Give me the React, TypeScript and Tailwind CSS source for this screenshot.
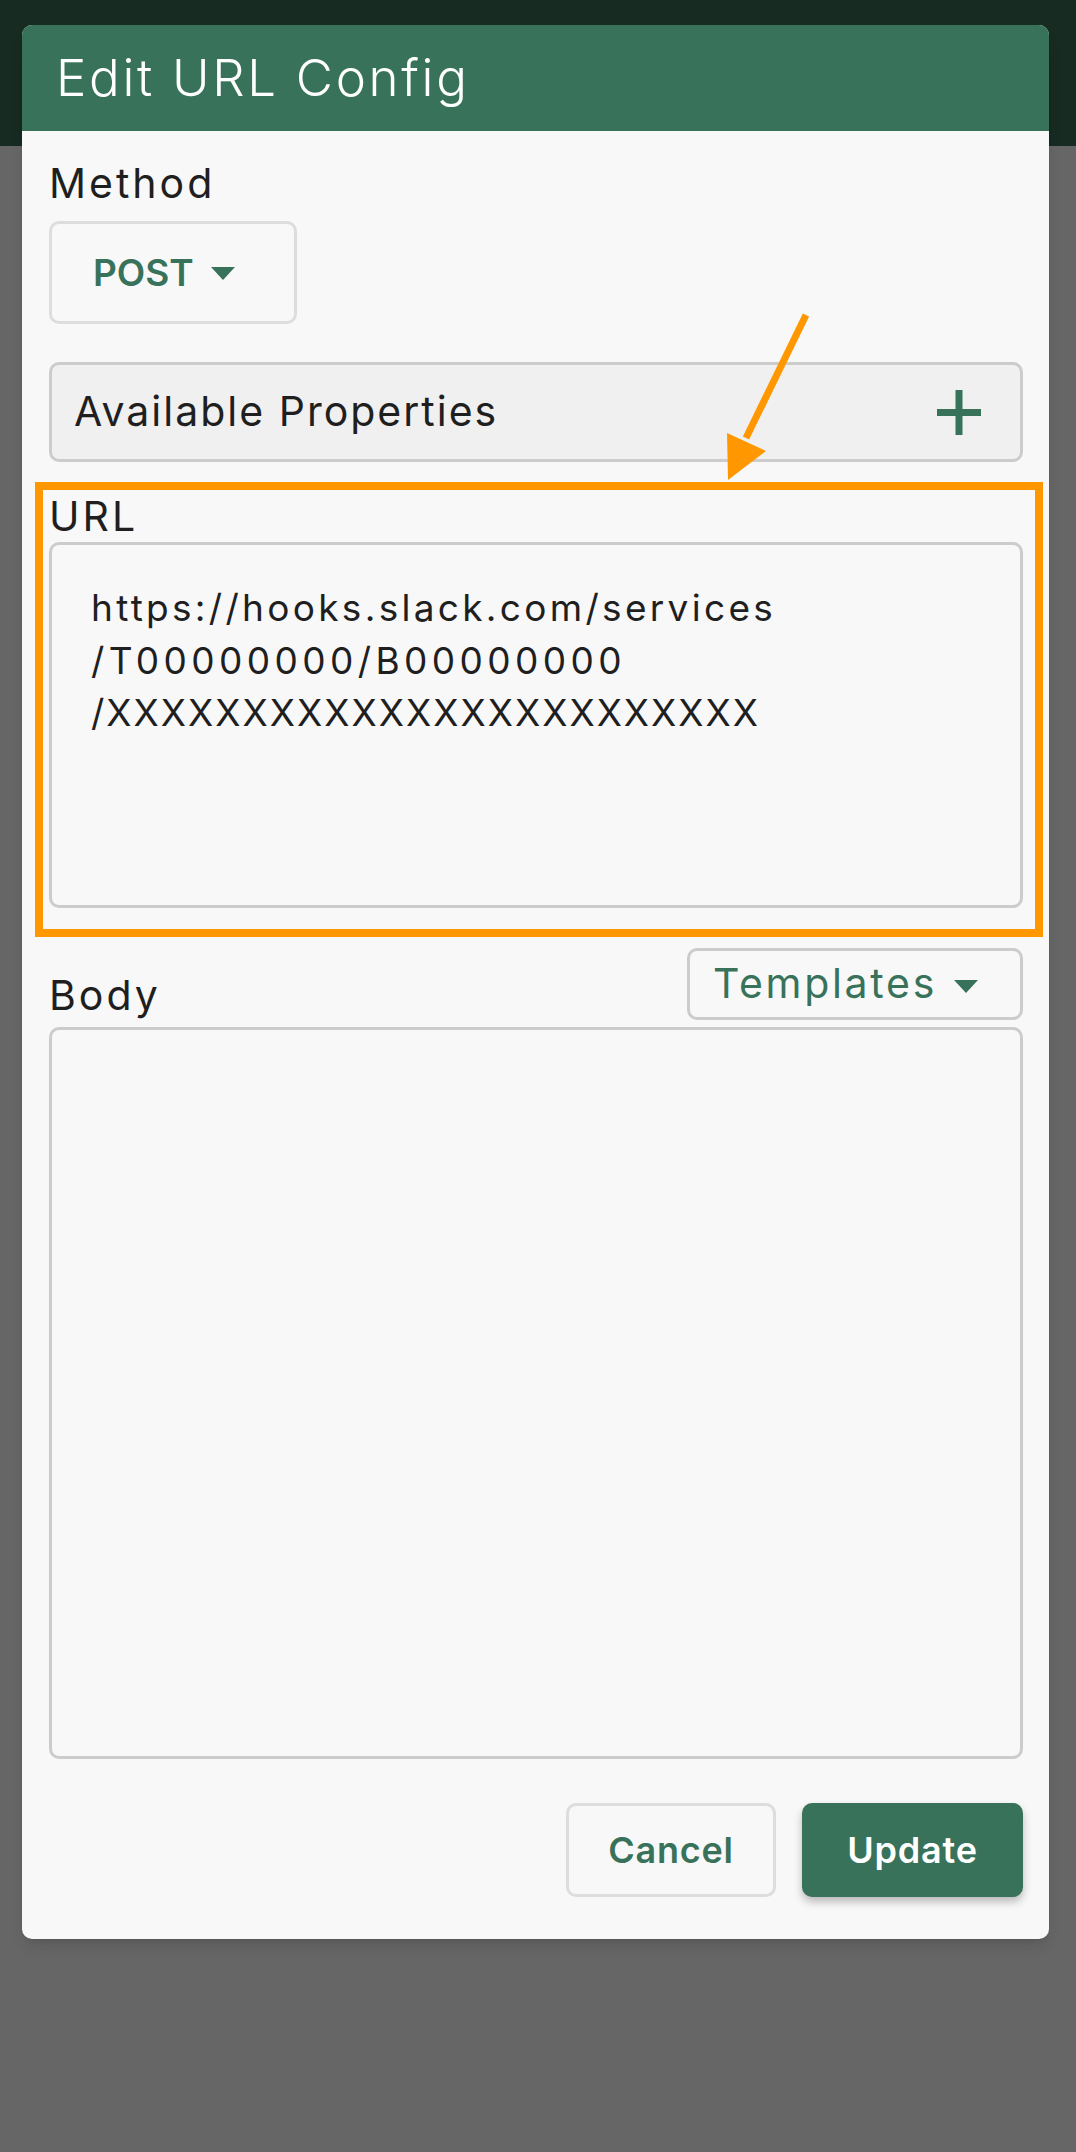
import { useState } from 'react';

const font = { fontFamily: 'Inter, "Noto Sans", sans-serif' };

const Caret = ({ className }: { className?: string }) => (
  <svg width="24" height="13" viewBox="0 0 24 13" className={className}>
    <path d="M0 0 L24 0 L12 13 Z" fill="currentColor" />
  </svg>
);

const PlusIcon = () => (
  <svg width="44" height="45" viewBox="0 0 44 45">
    <path d="M22 0 V45 M0 22.5 H44" stroke="#38725a" strokeWidth="7" />
  </svg>
);

const ArrowMark = () => (
  <svg
    width="140"
    height="190"
    viewBox="0 0 140 190"
    className="pointer-events-none absolute left-[700px] top-[300px]"
  >
    <path d="M106 15 L46 138" stroke="#ff9800" strokeWidth="7" />
    <path d="M27 133 L66 151 L28 180 Z" fill="#ff9800" />
  </svg>
);

export default function App() {
  const [method] = useState('POST');

  return (
    <div className="relative h-[2152px] w-[1076px] overflow-hidden bg-[#666666]" style={font}>
      {/* dimmed app bar behind the dialog */}
      <div className="h-[146px] w-full bg-[#172b22]" />

      <div className="absolute left-[22px] top-[25px] w-[1027px] overflow-hidden rounded-[10px] bg-[#f8f8f8] shadow-lg">
        <div className="flex h-[106px] items-start bg-[#38725a] pl-[34px]">
          <h1 className="mt-[22px] text-[51px] leading-[62px] font-light tracking-[2.7px] text-white">Edit URL Config</h1>
        </div>

        <div className="flex flex-col pt-[27px] pr-[26px] pb-[42px] pl-[27px]">
          <label className="text-[41px] leading-[50px] tracking-[3px] text-[#1f1f1f]">Method</label>

          <button className="mt-[13px] flex h-[103px] w-[248px] items-center gap-[17px] rounded-[10px] border-[3px] border-[#dddddd] pl-[41px]">
            <span className="text-[37px] font-semibold text-[#38725a]">{method}</span>
            <Caret className="mt-[2px] text-[#38725a]" />
          </button>

          <div className="mt-[38px] flex h-[100px] items-center justify-between rounded-[10px] border-[3px] border-[#cccccc] bg-[#f0f0f0] pr-[39px] pl-[22px]">
            <span className="text-[41px] tracking-[2px] text-[#1f1f1f]">Available Properties</span>
            <PlusIcon />
          </div>

          <label className="mt-[29px] text-[41px] leading-[50px] tracking-[3px] text-[#1f1f1f]">URL</label>
          <div className="mt-[1px] h-[366px] rounded-[10px] border-[3px] border-[#cccccc] pt-[37px] pl-[39px] text-[37px] leading-[52.5px] text-[#1f1f1f]">
            <div className="tracking-[3.3px]">https://hooks.slack.com/services</div>
            <div className="tracking-[4.4px]">/T00000000/B00000000</div>
            <div className="tracking-[2px]">/XXXXXXXXXXXXXXXXXXXXXXXX</div>
          </div>

          <div className="mt-[40px] flex h-[72px] items-end justify-between">
            <label className="text-[41px] leading-[50px] tracking-[3px] text-[#1f1f1f]">Body</label>
            <button className="flex h-[72px] w-[336px] items-center gap-[17px] rounded-[10px] border-[3px] border-[#cccccc] pl-[23px]">
              <span className="text-[41px] tracking-[2.7px] text-[#38725a]">Templates</span>
              <Caret className="mt-[4px] text-[#38725a]" />
            </button>
          </div>

          <div className="mt-[7px] h-[732px] rounded-[10px] border-[3px] border-[#cccccc]" />

          <div className="mt-[44px] flex justify-end gap-[26px]">
            <button className="flex h-[94px] w-[210px] items-center justify-center rounded-[10px] border-[3px] border-[#dddddd] text-[36px] font-semibold tracking-[0.8px] text-[#38725a]">
              Cancel
            </button>
            <button className="flex h-[94px] w-[221px] items-center justify-center rounded-[10px] bg-[#38725a] text-[36px] font-semibold tracking-[0.8px] text-white shadow-[0_5px_8px_rgba(0,0,0,0.25)]">
              Update
            </button>
          </div>
        </div>

        {/* orange highlight around the URL field */}
        <div className="pointer-events-none absolute left-[13px] top-[457px] h-[455px] w-[1008px] border-[8px] border-[#ff9800]" />
      </div>

      <ArrowMark />
    </div>
  );
}
